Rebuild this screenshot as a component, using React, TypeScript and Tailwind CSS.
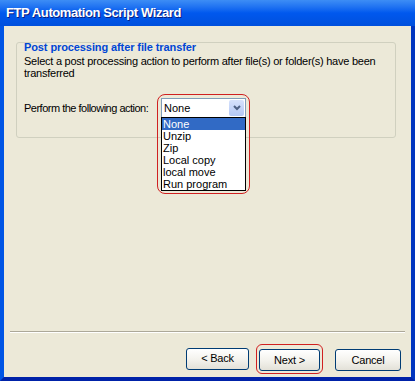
const options = ["None", "Unzip", "Zip", "Local copy", "local move", "Run program"];

const XpButton = ({ label, w }: { label: string; w: string }) => (
  <button
    className={`${w} h-[22px] rounded-[3px] border border-[#003C74] bg-gradient-to-b from-white via-[#F4F3EE] to-[#E3E1D8] text-[11px] tracking-[-0.2px] text-black leading-none`}
  >
    {label}
  </button>
);

const App = () => {
  return (
    <div
      className="w-[415px] h-[381px] flex flex-col bg-[#0054E3] overflow-hidden"
      style={{ fontFamily: '"Liberation Sans", Arial, sans-serif' }}
    >
      {/* title bar */}
      <div className="h-[26px] shrink-0 flex items-center px-[6px] bg-gradient-to-b from-[#3D8DF5] via-[#0058EE] to-[#0050DD]">
        <span className="text-white font-bold text-[13px] tracking-[-0.4px] [text-shadow:1px_1px_0_#0A1E80]">
          FTP Automation Script Wizard
        </span>
      </div>

      {/* body */}
      <div className="flex-1 flex flex-col border-l-4 border-r-4 border-b-4 border-l-[#0055E5] border-r-[#0035BF] border-b-[#0022A8] bg-[#ECE9D8]">
        <div className="mt-[16px] ml-[12px] mr-[15px] h-[96px] rounded-[3px] border border-[#D0D0BF] px-[7px] text-[11px] text-black">
          <div className="mt-[-2px] leading-[13px] font-bold text-[11px] tracking-[-0.1px] text-[#0046D5]">
            Post processing after file transfer
          </div>
          <div className="mt-[1px] leading-[12px] tracking-[-0.25px]">
            Select a post processing action to perform after file(s) or folder(s) have been
            <br />
            transferred
          </div>

          <div className="mt-[19px] flex items-center">
            <span className="w-[137px] whitespace-nowrap tracking-[-0.5px]">Perform the following action:</span>
            <div className="relative">
              {/* red highlight ring */}
              <div className="absolute left-[-4px] top-[-4px] w-[93px] h-[100px] rounded-[8px] border border-[#D02020]" />
              <div className="w-[85px] h-[20px] flex items-center justify-between border border-[#7F9DB9] bg-white pl-[2px] pr-[1px]">
                <span>None</span>
                <div className="w-[15px] h-[16px] rounded-[2px] bg-gradient-to-b from-[#D6E2FC] to-[#B4C8F5] flex items-center justify-center">
                  <svg width="8" height="6" viewBox="0 0 8 6">
                    <path d="M1 1 L4 4 L7 1" fill="none" stroke="#4D6185" strokeWidth="2" />
                  </svg>
                </div>
              </div>
              {/* dropdown list */}
              <div className="absolute left-0 top-[19px] w-[85px] border border-black bg-white">
                {options.map((o, i) => (
                  <div
                    key={o}
                    className={`h-[12px] leading-[12px] pl-[1px] ${i === 0 ? "bg-[#316AC5] text-white" : "text-black"}`}
                  >
                    {o}
                  </div>
                ))}
              </div>
            </div>
          </div>
        </div>

        <div className="flex-1" />

        {/* separator */}
        <div className="mx-[6px] border-t border-[#ACA899] border-b border-b-white" />

        <div className="flex justify-end items-center pr-[10px] pt-[11px] pb-[3px]">
          <XpButton label="< Back" w="w-[63px]" />
          <div className="ml-[7px] p-[2px] rounded-[6px] border border-[#D02020]">
            <XpButton label="Next >" w="w-[61px]" />
          </div>
          <div className="ml-[12px]">
            <XpButton label="Cancel" w="w-[66px]" />
          </div>
        </div>
      </div>
    </div>
  );
};

export default App;
